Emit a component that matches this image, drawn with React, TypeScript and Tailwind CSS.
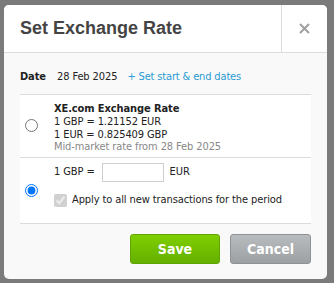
import React from "react";

export default function App() {
  const body = { fontFamily: '"DejaVu Sans Condensed", "DejaVu Sans", sans-serif' };
  return (
    <div className="w-[334px] h-[283px] bg-[#7b7b7b] pt-[5px] pl-[4px] overflow-hidden">
      <div className="w-[323px] h-[274px] rounded-[5px] bg-[#f9f9f9] overflow-hidden flex flex-col" style={body}>
        <div className="h-[48px] bg-white border-b border-[#dcdcdc] flex shrink-0">
          <div className="flex-1 flex items-center pl-[16px] border-r border-[#dcdcdc]">
            <span className="text-[18px] font-bold text-[#444]" style={{ fontFamily: '"Liberation Sans", Arial, sans-serif' }}>
              Set Exchange Rate
            </span>
          </div>
          <div className="w-[45px] flex items-center justify-center pb-[1px]">
            <svg width="11" height="11" viewBox="0 0 11 11">
              <path d="M1 1 L10 10 M10 1 L1 10" stroke="#a0a0a0" strokeWidth="2" />
            </svg>
          </div>
        </div>
        <div className="px-[16px]">
          <div className="h-[41px] flex items-center text-[11px] tracking-[-0.1px] text-[#222] pt-[7px]">
            <span className="font-bold">Date</span>
            <span className="ml-[11px]">28 Feb 2025</span>
            <span className="ml-[10px] tracking-[-0.15px] text-[#2a9bd3]">+ Set start &amp; end dates</span>
          </div>
          <div className="bg-white border-t border-b border-[#dcdcdc] text-[11px] tracking-[-0.1px] text-[#222]">
            <div className="h-[63px] flex items-center border-b border-[#dcdcdc]">
              <div className="w-[34px] flex justify-start pl-[5px] pb-[1px]">
                <input type="radio" name="r" className="m-0 w-[13px] h-[13px]" />
              </div>
              <div className="leading-[12.7px] pt-[5px]">
                <div className="font-bold">XE.com Exchange Rate</div>
                <div>1 GBP = 1.21152 EUR</div>
                <div>1 EUR = 0.825409 GBP</div>
                <div className="text-[#888]">Mid-market rate from 28 Feb 2025</div>
              </div>
            </div>
            <div className="h-[65px] flex">
              <div className="w-[34px] flex justify-start pl-[5px] pt-[26px]">
                <input type="radio" name="r" defaultChecked className="m-0 w-[13px] h-[13px]" />
              </div>
              <div className="pt-[5px]">
                <div className="flex items-center h-[19px]">
                  <span>1 GBP =</span>
                  <input type="text" className="ml-[7px] w-[62px] h-[19px] border border-[#cfcfcf] bg-white outline-none" />
                  <span className="ml-[6px]">EUR</span>
                </div>
                <div className="flex items-center mt-[10px]">
                  <input type="checkbox" defaultChecked disabled className="m-0 w-[13px] h-[13px]" />
                  <span className="ml-[5px]">Apply to all new transactions for the period</span>
                </div>
              </div>
            </div>
          </div>
          <div className="flex justify-end gap-[10px] mt-[10px]">
            <button className="w-[90px] h-[30px] rounded-[3px] border border-[#5fa400] bg-gradient-to-b from-[#7fcf00] to-[#64b000] text-white font-bold text-[14px]">
              Save
            </button>
            <button className="w-[81px] h-[30px] rounded-[3px] border border-[#8e9295] bg-gradient-to-b from-[#b8bcbf] to-[#9ca0a3] text-white font-bold text-[14px]">
              Cancel
            </button>
          </div>
        </div>
      </div>
    </div>
  );
}
